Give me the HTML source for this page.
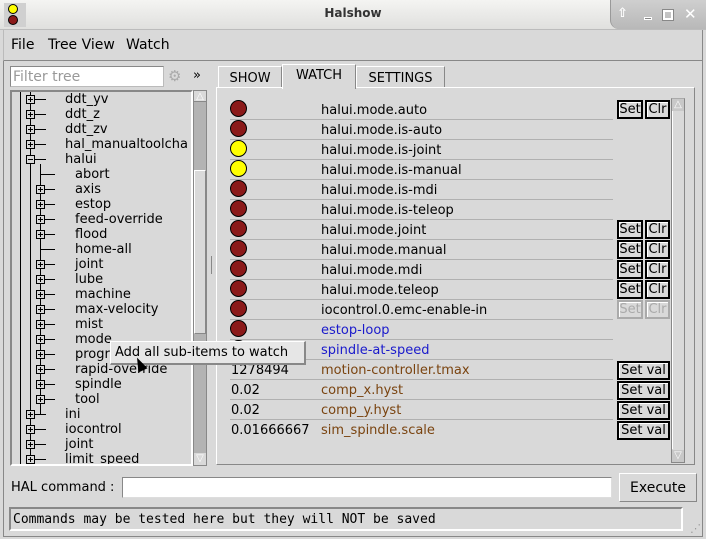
<!DOCTYPE html>
<html><head><meta charset="utf-8"><style>
*{margin:0;padding:0;box-sizing:border-box}
body{width:706px;height:539px;background:#d9d9d9;font-family:"DejaVu Sans","Liberation Sans",sans-serif;font-size:13px;color:#000;position:relative;overflow:hidden}
.a{position:absolute;white-space:nowrap}
.t{position:absolute;white-space:nowrap;line-height:15px;margin-top:1px}
.bx{position:absolute;width:9px;height:9px;border:1px solid #000;background:#d9d9d9}
.bx:before{content:"";position:absolute;left:1px;top:3px;width:5px;height:1px;background:#000}
.p:after{content:"";position:absolute;left:3px;top:1px;width:1px;height:5px;background:#000}
.h{position:absolute;height:1px;background:#000}
.v{position:absolute;width:1px;background:#000}
.c{position:absolute;width:17px;height:17px;border-radius:50%;border:1px solid #000}
.r{background:#8b1a1a}.y{background:#ff0}
.sep{position:absolute;left:230px;width:383px;height:1px;background:#b0b0b0}
.btn{position:absolute;height:19px;border:2px solid #000;background:#d9d9d9;line-height:15px;text-align:center;font-size:13px;box-shadow:inset 1px 1px #fff;margin-top:1px}
.dis{color:#aaa;border-color:#aaa}
.nm{position:absolute;left:321px;line-height:16px;margin-top:2px}
.vl{position:absolute;left:231px;line-height:16px;margin-top:2px}
.bl{color:#1a1acc}.br{color:#7a4410}
</style></head><body>
<div class="a" style="left:0;top:0;width:706px;height:30px;background:linear-gradient(#f4f4f2,#e0e0de);border-bottom:1px solid #bcbcbc"></div>
<div class="a" style="left:4px;top:3px;width:22px;height:24px;background:#d0d0d0"></div>
<div class="a" style="left:8px;top:4px;width:10px;height:10px;border-radius:50%;background:#ff0;border:1px solid #000"></div>
<div class="a" style="left:8px;top:15px;width:10px;height:10px;border-radius:50%;background:#8b1a1a;border:1px solid #000"></div>
<div class="a" style="left:0;top:6px;width:706px;text-align:center;font-weight:bold;font-size:12px;color:#333">Halshow</div>
<div class="a" style="left:610px;top:0;width:96px;height:29px;background:linear-gradient(#cfcfcf,#b8b8b8);border-radius:0 0 0 9px;border-left:1px solid #999"></div>
<div class="a" style="left:617px;top:6px;color:#fff;font-size:13px;font-weight:bold">⇧</div>
<div class="a" style="left:644px;top:17px;width:8px;height:3px;border:1px solid #fff;background:#888"></div>
<div class="a" style="left:663px;top:10px;width:10px;height:10px;border:2px solid #fff;outline:1px solid #888"></div>
<div class="a" style="left:684px;top:5px;color:#fff;font-size:15px;font-weight:bold">✕</div>
<div class="a" style="left:3px;top:30px;width:700px;height:31px;border:1px solid #888;border-top:none;border-left:1px solid #bbb"></div>
<div class="a" style="left:11px;top:37px;font-size:14px">File</div>
<div class="a" style="left:48px;top:37px;font-size:14px">Tree View</div>
<div class="a" style="left:126px;top:37px;font-size:14px">Watch</div>
<div class="a" style="left:3px;top:61px;width:700px;height:476px;border-left:1px solid #888;border-right:1px solid #888;border-bottom:1px solid #888"></div>
<div class="a" style="left:10px;top:66px;width:154px;height:21px;background:#fff;border:1px solid #bbb;border-top-color:#888;border-left-color:#888;color:#999;font-size:14px;padding-left:2px;line-height:21px">Filter tree</div>
<div class="a" style="left:168px;top:67px;color:#aaa;font-size:15px">⚙</div>
<div class="a" style="left:193px;top:68px;font-size:13px">»</div>
<div class="a" style="left:10px;top:90px;width:183px;height:376px;border:2px solid #888;border-right-color:#fff;border-bottom-color:#fff;overflow:hidden">
<div style="position:absolute;left:-12px;top:-92px;width:200px;height:500px">
<div class="v" style="left:20px;top:90px;height:380px"></div>
<div class="v" style="left:30px;top:90px;height:380px"></div>
<div class="v" style="left:40px;top:164px;height:250px"></div>
<div class="h" style="left:30px;top:99px;width:16px"></div><div class="bx p" style="left:26px;top:95px"></div><div class="t" style="left:65px;top:91px">ddt_yv</div>
<div class="h" style="left:30px;top:114px;width:16px"></div><div class="bx p" style="left:26px;top:110px"></div><div class="t" style="left:65px;top:106px">ddt_z</div>
<div class="h" style="left:30px;top:129px;width:16px"></div><div class="bx p" style="left:26px;top:125px"></div><div class="t" style="left:65px;top:121px">ddt_zv</div>
<div class="h" style="left:30px;top:144px;width:16px"></div><div class="bx p" style="left:26px;top:140px"></div><div class="t" style="left:65px;top:136px">hal_manualtoolcha</div>
<div class="h" style="left:30px;top:159px;width:16px"></div><div class="bx" style="left:26px;top:155px"></div><div class="t" style="left:65px;top:151px">halui</div>
<div class="h" style="left:40px;top:174px;width:15px"></div><div class="t" style="left:75px;top:166px">abort</div>
<div class="h" style="left:40px;top:189px;width:15px"></div><div class="bx p" style="left:36px;top:185px"></div><div class="t" style="left:75px;top:181px">axis</div>
<div class="h" style="left:40px;top:204px;width:15px"></div><div class="bx p" style="left:36px;top:200px"></div><div class="t" style="left:75px;top:196px">estop</div>
<div class="h" style="left:40px;top:219px;width:15px"></div><div class="bx p" style="left:36px;top:215px"></div><div class="t" style="left:75px;top:211px">feed-override</div>
<div class="h" style="left:40px;top:234px;width:15px"></div><div class="bx p" style="left:36px;top:230px"></div><div class="t" style="left:75px;top:226px">flood</div>
<div class="h" style="left:40px;top:249px;width:15px"></div><div class="t" style="left:75px;top:241px">home-all</div>
<div class="h" style="left:40px;top:264px;width:15px"></div><div class="bx p" style="left:36px;top:260px"></div><div class="t" style="left:75px;top:256px">joint</div>
<div class="h" style="left:40px;top:279px;width:15px"></div><div class="bx p" style="left:36px;top:275px"></div><div class="t" style="left:75px;top:271px">lube</div>
<div class="h" style="left:40px;top:294px;width:15px"></div><div class="bx p" style="left:36px;top:290px"></div><div class="t" style="left:75px;top:286px">machine</div>
<div class="h" style="left:40px;top:309px;width:15px"></div><div class="bx p" style="left:36px;top:305px"></div><div class="t" style="left:75px;top:301px">max-velocity</div>
<div class="h" style="left:40px;top:324px;width:15px"></div><div class="bx p" style="left:36px;top:320px"></div><div class="t" style="left:75px;top:316px">mist</div>
<div class="h" style="left:40px;top:339px;width:15px"></div><div class="bx p" style="left:36px;top:335px"></div><div class="t" style="left:75px;top:331px">mode</div>
<div class="h" style="left:40px;top:354px;width:15px"></div><div class="bx p" style="left:36px;top:350px"></div><div class="t" style="left:75px;top:346px">program</div>
<div class="h" style="left:40px;top:369px;width:15px"></div><div class="bx p" style="left:36px;top:365px"></div><div class="t" style="left:75px;top:361px">rapid-override</div>
<div class="h" style="left:40px;top:384px;width:15px"></div><div class="bx p" style="left:36px;top:380px"></div><div class="t" style="left:75px;top:376px">spindle</div>
<div class="h" style="left:40px;top:399px;width:15px"></div><div class="bx p" style="left:36px;top:395px"></div><div class="t" style="left:75px;top:391px">tool</div>
<div class="h" style="left:30px;top:414px;width:16px"></div><div class="bx p" style="left:26px;top:410px"></div><div class="t" style="left:65px;top:406px">ini</div>
<div class="h" style="left:30px;top:429px;width:16px"></div><div class="bx p" style="left:26px;top:425px"></div><div class="t" style="left:65px;top:421px">iocontrol</div>
<div class="h" style="left:30px;top:444px;width:16px"></div><div class="bx p" style="left:26px;top:440px"></div><div class="t" style="left:65px;top:436px">joint</div>
<div class="h" style="left:30px;top:459px;width:16px"></div><div class="bx p" style="left:26px;top:455px"></div><div class="t" style="left:65px;top:451px">limit_speed</div>
</div></div>
<div class="a" style="left:193px;top:90px;width:14px;height:376px;background:#b3b3b3;border:1px solid #888"></div>
<div class="a" style="left:194px;top:91px;width:12px;height:11px;background:#d9d9d9;border-bottom:1px solid #888;color:#fff;font-size:10px;text-align:center;line-height:11px">△</div>
<div class="a" style="left:194px;top:170px;width:12px;height:164px;background:#d9d9d9;border:1px solid #fff;border-right-color:#888;border-bottom-color:#888"></div>
<div class="a" style="left:194px;top:453px;width:12px;height:12px;background:#d9d9d9;color:#fff;font-size:10px;text-align:center;line-height:11px">▽</div>
<div class="a" style="left:211px;top:256px;width:1px;height:18px;background:#888"></div>
<div class="a" style="left:218px;top:66px;width:64px;height:22px;border:1px solid #888;border-bottom:none;border-top-color:#fff;border-left-color:#fff;text-align:center;line-height:23px">SHOW</div>
<div class="a" style="left:356px;top:66px;width:89px;height:22px;border:1px solid #888;border-bottom:none;border-top-color:#fff;border-left-color:#fff;text-align:center;line-height:23px">SETTINGS</div>
<div class="a" style="left:216px;top:87px;width:479px;height:378px;border:1px solid #888;border-top-color:#fff;border-left-color:#fff"></div>
<div class="a" style="left:282px;top:64px;width:74px;height:25px;background:#d9d9d9;border:1px solid #fff;border-right-color:#888;border-bottom:none;text-align:center;line-height:22px">WATCH</div>
<div class="c r" style="left:230px;top:100px"></div><div class="nm" style="top:101px">halui.mode.auto</div>
<div class="c r" style="left:230px;top:120px"></div><div class="nm" style="top:121px">halui.mode.is-auto</div>
<div class="c y" style="left:230px;top:140px"></div><div class="nm" style="top:141px">halui.mode.is-joint</div>
<div class="c y" style="left:230px;top:160px"></div><div class="nm" style="top:161px">halui.mode.is-manual</div>
<div class="c r" style="left:230px;top:180px"></div><div class="nm" style="top:181px">halui.mode.is-mdi</div>
<div class="c r" style="left:230px;top:200px"></div><div class="nm" style="top:201px">halui.mode.is-teleop</div>
<div class="c r" style="left:230px;top:220px"></div><div class="nm" style="top:221px">halui.mode.joint</div>
<div class="c r" style="left:230px;top:240px"></div><div class="nm" style="top:241px">halui.mode.manual</div>
<div class="c r" style="left:230px;top:260px"></div><div class="nm" style="top:261px">halui.mode.mdi</div>
<div class="c r" style="left:230px;top:280px"></div><div class="nm" style="top:281px">halui.mode.teleop</div>
<div class="c r" style="left:230px;top:300px"></div><div class="nm" style="top:301px">iocontrol.0.emc-enable-in</div>
<div class="c r" style="left:230px;top:320px"></div><div class="nm bl" style="top:321px">estop-loop</div>
<div class="c r" style="left:230px;top:340px"></div><div class="nm bl" style="top:341px">spindle-at-speed</div>
<div class="vl" style="top:361px">1278494</div><div class="nm br" style="top:361px">motion-controller.tmax</div>
<div class="vl" style="top:381px">0.02</div><div class="nm br" style="top:381px">comp_x.hyst</div>
<div class="vl" style="top:401px">0.02</div><div class="nm br" style="top:401px">comp_y.hyst</div>
<div class="vl" style="top:421px">0.01666667</div><div class="nm br" style="top:421px">sim_spindle.scale</div>
<div class="sep" style="top:119px"></div><div class="sep" style="top:139px"></div><div class="sep" style="top:159px"></div><div class="sep" style="top:179px"></div><div class="sep" style="top:199px"></div><div class="sep" style="top:219px"></div><div class="sep" style="top:239px"></div><div class="sep" style="top:259px"></div><div class="sep" style="top:279px"></div><div class="sep" style="top:299px"></div><div class="sep" style="top:319px"></div><div class="sep" style="top:339px"></div><div class="sep" style="top:359px"></div><div class="sep" style="top:379px"></div><div class="sep" style="top:399px"></div><div class="sep" style="top:419px"></div>
<div class="btn" style="left:617px;top:99px;width:26px">Set</div><div class="btn" style="left:645px;top:99px;width:25px">Clr</div>
<div class="btn" style="left:617px;top:219px;width:26px">Set</div><div class="btn" style="left:645px;top:219px;width:25px">Clr</div>
<div class="btn" style="left:617px;top:239px;width:26px">Set</div><div class="btn" style="left:645px;top:239px;width:25px">Clr</div>
<div class="btn" style="left:617px;top:259px;width:26px">Set</div><div class="btn" style="left:645px;top:259px;width:25px">Clr</div>
<div class="btn" style="left:617px;top:279px;width:26px">Set</div><div class="btn" style="left:645px;top:279px;width:25px">Clr</div>
<div class="btn dis" style="left:617px;top:299px;width:26px">Set</div><div class="btn dis" style="left:645px;top:299px;width:25px">Clr</div>
<div class="btn" style="left:617px;top:360px;width:53px">Set val</div>
<div class="btn" style="left:617px;top:380px;width:53px">Set val</div>
<div class="btn" style="left:617px;top:400px;width:53px">Set val</div>
<div class="btn" style="left:617px;top:420px;width:53px">Set val</div>
<div class="a" style="left:671px;top:98px;width:14px;height:365px;background:#d9d9d9;border:1px solid #888;border-top-color:#aaa"></div>
<div class="a" style="left:672px;top:99px;width:12px;height:12px;background:#c8c8c8;color:#fff;font-size:10px;text-align:center;line-height:11px">△</div>
<div class="a" style="left:672px;top:111px;width:1px;height:338px;background:#fff"></div>
<div class="a" style="left:672px;top:450px;width:12px;height:12px;background:#c8c8c8;color:#fff;font-size:10px;text-align:center;line-height:11px">▽</div>
<div class="a" style="left:110px;top:341px;width:196px;height:24px;background:#e6e6e6;border:1px solid #fff;border-right:2px solid #888;border-bottom:2px solid #888;padding-left:4px;line-height:22px;font-size:13px">Add all sub-items to watch</div>
<div class="a" style="left:135px;top:357px;width:0;height:0;border-left:5px solid transparent;border-right:5px solid transparent;border-bottom:14px solid #000;transform:rotate(-25deg)"></div>
<div class="a" style="left:11px;top:480px;font-size:13px">HAL command :</div>
<div class="a" style="left:122px;top:477px;width:490px;height:21px;background:#fff;border:1px solid #888;border-right-color:#ddd;border-bottom-color:#ddd"></div>
<div class="a" style="left:619px;top:473px;width:78px;height:29px;border:1px solid #fff;border-right-color:#888;border-bottom-color:#888;text-align:center;line-height:28px;font-size:14px">Execute</div>
<div class="a" style="left:9px;top:507px;width:674px;height:24px;border:2px solid #888;border-right-color:#fff;border-bottom-color:#fff;font-family:'DejaVu Sans Mono','Liberation Mono',monospace;font-size:13px;line-height:21px;padding-left:2px">Commands may be tested here but they will NOT be saved</div>
<div class="a" style="left:690px;top:522px;color:#999;font-size:11px">⋰</div>
</body></html>
